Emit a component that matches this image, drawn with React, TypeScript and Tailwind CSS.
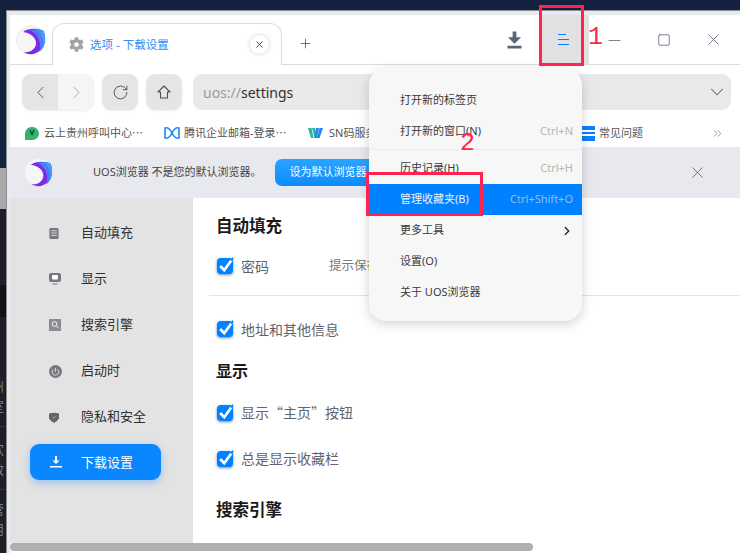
import { ChevronLeft, ChevronRight, ChevronDown, ChevronsRight, RotateCw, Plus, X, Minus, Square } from "lucide-react";
import { FaCog } from "react-icons/fa";

const font = "font-['Noto_Sans','Noto_Sans_CJK_SC',sans-serif]";

function Logo({ size }: { size: number }) {
    return (
        <svg width={size} height={size} viewBox="0 0 30 30" className="shrink-0">
            <circle cx="15" cy="15" r="14.5" fill="#f6f6f6" stroke="#e2e2e2" strokeWidth="0.6" />
            <path d="M7 7 C12 3 22 3 27.5 6 C30.5 14 29 24 20 28 C16 30 11 29.5 8 27 C14 28 20 24 20 18 C20 12 14 8 7 7 Z" fill="#7a2bea" />
            <path d="M14 5 C19 3.5 24 4 27.5 6 C30.5 14 29 23 23 27 C26 19 23 10 14 5 Z" fill="#4f7bf5" />
            <path d="M21 4.5 C24 4.5 26 5 27.5 6 C30 11 29.5 17 27 22 C28 15 26 9 21 4.5 Z" fill="#3f9ffb" />
        </svg>
    );
}

function Check() {
    return (
        <div className="relative w-4 h-4 rounded-[4px] bg-[#0081ff] shadow-[0_1px_3px_rgba(0,60,140,0.6)] shrink-0">
            <svg viewBox="0 0 16 16" className="absolute left-0 -top-[1px] w-[17px] h-[17px] overflow-visible">
                <path d="M3 8.5 L6.8 12.5 L13.4 3.2" fill="none" stroke="#fff" strokeWidth="2.5" />
                <path d="M13.4 3.2 L15.2 0.8" fill="none" stroke="#0081ff" strokeWidth="1.6" />
            </svg>
        </div>
    );
}

function NavItem({ label, icon }: { label: string; icon: React.ReactNode }) {
    return (
        <div className="h-[46px] flex items-center text-[13px] text-[#303030]">
            <div className="w-[52px] pl-[19px] flex justify-start">{icon}</div>
            <span className="-ml-px">{label}</span>
        </div>
    );
}

function MenuRow({ label, hint, active, arrow }: { label: string; hint?: string; active?: boolean; arrow?: boolean }) {
    return (
        <div className={`h-[31px] pl-[31px] pr-[9px] flex items-center justify-between text-[11px] ${active ? "bg-[#0081ff] text-[#e8f2ff]" : "text-[#3a3a3a]"}`}>
            <span>{label}</span>
            {hint && <span className={active ? "text-[#8fbfee]" : "text-[#b4b4b4]"}>{hint}</span>}
            {arrow && <ChevronRight className="w-[14px] h-[14px] text-[#222] -mr-[1px]" strokeWidth={2.2} />}
        </div>
    );
}

function Option({ label, h }: { label: string; h: string }) {
    return (
        <div className={`flex items-center gap-[8px] text-[14px] text-[#5f6470] pl-[8px] ${h}`}>
            <Check />
            <span className="font-['Noto_Sans_CJK_SC',sans-serif]">{label}</span>
        </div>
    );
}

export default function App() {
    return (
        <div className={`relative w-[740px] h-[553px] overflow-hidden bg-[#142040] ${font}`}>
            <div className="h-[10px] bg-[#14213f]" />
            <div className="flex h-[543px]">
                {/* desktop strip */}
                <div className="w-[6px] flex flex-col text-[13px] leading-[20px] text-[#7a7f88] overflow-hidden">
                    <div className="h-[158px] bg-[#14213f] shrink-0" />
                    <div className="h-[41px] bg-[#a9a9a9] shrink-0" />
                    <div className="h-[76px] bg-[#1d2026] shrink-0" />
                    <div className="h-[32px] bg-[#121317] shrink-0" />
                    <div className="h-[110px] bg-[#1d2026] pt-[59px] -indent-[9px] shrink-0 border-b border-[#33363c]">
                        <div>州</div>
                        <div>室</div>
                    </div>
                    <div className="h-[63px] bg-[#1d2026] pt-[12px] -indent-[9px] shrink-0 border-b border-[#33363c]">
                        <div>欢</div>
                        <div>效</div>
                    </div>
                    <div className="flex-1 bg-[#1d2026] pt-[9px] -indent-[9px]">
                        <div>管</div>
                        <div>用</div>
                    </div>
                </div>

                {/* browser window */}
                <div className="w-[734px] border-t border-l border-[#8a8c92] bg-[#e8eaf0] pt-[4px] pl-[3px] flex flex-col">
                    {/* tab bar */}
                    <div className="h-[50px] bg-white border-b border-[#dcdcdc] flex items-end shrink-0">
                        <div className="w-[42px] h-full pl-[6px] flex items-center"><Logo size={30} /></div>
                        <div className="w-[230px] h-[42px] -mb-px bg-white border border-b-0 border-[#dcdcdc] rounded-t-[12px] flex items-center pl-[16px] pr-[12px] text-[11.5px] text-[#2f8cf0]">
                            <FaCog className="w-[15px] h-[15px] text-[#a3a3a3] mr-[6px]" />
                            <span className="flex-1">选项 - 下载设置</span>
                            <div className="w-[19px] h-[19px] rounded-full bg-white shadow-[0_0_4px_rgba(0,0,0,0.2)] flex items-center justify-center">
                                <X className="w-[11px] h-[11px] text-[#444]" />
                            </div>
                        </div>
                        <div className="w-[46px] h-[42px] flex items-center justify-center">
                            <Plus className="w-[15px] h-[15px] text-[#555]" strokeWidth={1.3} />
                        </div>
                        <div className="flex-1" />
                        <div className="w-[50px] h-full flex items-center justify-center pt-[1px]">
                            <svg viewBox="0 0 16 18" className="w-[15px] h-[18px] text-[#5b6478]" fill="currentColor">
                                <path d="M6 0 H10 V6 H15 L8 13 L1 6 H6 Z M0.5 15 H15.5 V18 H0.5 Z" />
                            </svg>
                        </div>
                        <div className="w-[50px] h-full bg-[#e1e1e3] flex flex-col items-center justify-center gap-[4px] pr-[1px]">
                            <div className="w-[8px] h-px bg-[#0a80ff] mr-[3px]" />
                            <div className="w-[11px] h-px bg-[#0a80ff]" />
                            <div className="w-[11px] h-px bg-[#0a80ff]" />
                        </div>
                        <div className="w-[52px] h-full flex items-center justify-center pt-[2px] pr-[2px]">
                            <Minus className="w-[19px] h-[19px] text-[#5b6478]" strokeWidth={1} />
                        </div>
                        <div className="w-[45px] h-full flex items-center justify-center pt-[1px]">
                            <Square className="w-[14px] h-[14px] text-[#5b6478]" strokeWidth={1.4} />
                        </div>
                        <div className="w-[54px] h-full flex items-center justify-center">
                            <X className="w-[19px] h-[19px] text-[#5b6478]" strokeWidth={1.1} />
                        </div>
                    </div>

                    {/* toolbar */}
                    <div className="h-[53px] bg-white flex items-start pt-[9px] pl-[12px] pr-[9px] shrink-0">
                        <div className="w-[72px] h-[36px] rounded-[9px] flex overflow-hidden shadow-[0_1px_2px_rgba(0,0,0,0.08)]">
                            <div className="w-[36px] bg-[#e5e5e5] flex items-center justify-center">
                                <ChevronLeft className="w-[21px] h-[21px] text-[#555]" strokeWidth={1.1} />
                            </div>
                            <div className="w-[36px] bg-[#f5f5f5] flex items-center justify-center">
                                <ChevronRight className="w-[21px] h-[21px] text-[#aaa]" strokeWidth={1.1} />
                            </div>
                        </div>
                        <div className="w-[36px] h-[36px] ml-[8px] rounded-[9px] bg-[#e5e5e5] shadow-[0_1px_2px_rgba(0,0,0,0.08)] flex items-center justify-center">
                            <RotateCw className="w-[17px] h-[17px] text-[#4a4f5c]" strokeWidth={1.3} />
                        </div>
                        <div className="w-[36px] h-[36px] ml-[8px] rounded-[9px] bg-[#e5e5e5] shadow-[0_1px_2px_rgba(0,0,0,0.08)] flex items-center justify-center">
                            <svg viewBox="0 0 14 14" className="w-[14px] h-[14px]" fill="none" stroke="#4a4f5c" strokeWidth="1.1">
                                <path d="M7 1 L13 7 H10.5 V13 H3.5 V7 H1 Z" strokeLinejoin="round" />
                            </svg>
                        </div>
                        <div className="flex-1 h-[36px] ml-[11px] rounded-[9px] bg-[#e9e9e9] flex items-center justify-between pl-[10px] pr-[3px] text-[14px]">
                            <span><span className="text-[#9a9a9a]">uos://</span><span className="text-[#303030]">settings</span></span>
                            <ChevronDown className="w-[22px] h-[22px] text-[#5b6478]" strokeWidth={1.1} />
                        </div>
                    </div>

                    {/* bookmarks */}
                    <div className="h-[29px] bg-white flex items-center pl-[15px] pr-[16px] pt-[1px] text-[11px] text-[#555] shrink-0">
                        <div className="w-[14px] h-[13px] rounded-full rounded-bl-none bg-[#2fb36f] text-[7px] text-[#222] font-bold flex items-center justify-center mr-[5px]">V</div>
                        <span className="w-[120px]">云上贵州呼叫中心⋯</span>
                        <svg viewBox="0 0 16 14" className="w-[16px] h-[14px] mr-[4px]" fill="none" stroke="#1e88f5" strokeWidth="1.6">
                            <path d="M1 2 C4 1 6 3 8 7 C10 11 12 13 15 12 V2 C12 1 10 3 8 7 C6 11 4 13 1 12 Z" />
                        </svg>
                        <span className="w-[124px]">腾讯企业邮箱-登录⋯</span>
                        <svg viewBox="0 0 15 10" className="w-[15px] h-[10px] mr-[6px]">
                            <path d="M0 0 H3.5 L5.5 10 H3 Z M4 0 H7 L9 10 H6.5 Z" fill="#27b5a0" />
                            <path d="M8 0 H11 L9 10 H6.5 Z M11.5 0 H15 L11.5 10 H9 Z" fill="#1e88f5" />
                        </svg>
                        <span className="flex-1">SN码服务</span>
                        <div className="w-[13px] h-[15px] bg-[#0a80ff] flex flex-col justify-center gap-[2px] mr-[4px]">
                            <div className="h-[2px] bg-white" />
                            <div className="h-[2px] bg-white" />
                        </div>
                        <span className="w-[112px]">常见问题</span>
                        <ChevronsRight className="w-[13px] h-[13px] text-[#666]" strokeWidth={1.3} />
                    </div>

                    {/* default browser bar */}
                    <div className="h-[51px] bg-[#e8e9ee] flex items-center pl-[14px] pr-[33px] shrink-0">
                        <Logo size={29} />
                        <span className="ml-[40px] text-[11px] text-[#444]">UOS浏览器 不是您的默认浏览器。</span>
                        <div className="ml-[13px] w-[110px] h-[27px] rounded-[7px] bg-gradient-to-b from-[#28a4ff] to-[#0a8cff] text-[11px] text-white flex items-center pl-[15px]">设为默认浏览器</div>
                        <div className="flex-1" />
                        <X className="w-[19px] h-[19px] text-[#5b6478]" strokeWidth={1.1} />
                    </div>

                    {/* settings page */}
                    <div className="flex-1 flex bg-white min-h-0">
                        <div className="w-[183px] bg-[#e3e3e3] pt-[12px] pl-[20px] pr-[32px]">
                            <NavItem label="自动填充" icon={
                                <svg viewBox="0 0 10 12" className="w-[10px] h-[11px]"><rect width="10" height="12" rx="1.5" fill="#77777f" /><path d="M2 3H8M2 5.5H8M2 8H8" stroke="#fff" strokeWidth="0.8" /></svg>
                            } />
                            <NavItem label="显示" icon={
                                <svg viewBox="0 0 12 12" className="w-[12px] h-[12px]"><rect width="12" height="9" rx="2" fill="#77777f" /><rect x="3" y="2" width="6" height="4.5" rx="1" fill="#fff" /><rect x="3.5" y="10.5" width="5" height="1" fill="#77777f" /></svg>
                            } />
                            <NavItem label="搜索引擎" icon={
                                <svg viewBox="0 0 12 12" className="w-[12px] h-[12px]"><rect width="12" height="12" fill="#8a8a90" /><circle cx="5.5" cy="5" r="2.4" fill="none" stroke="#fff" strokeWidth="0.9" /><path d="M7.3 6.8L10 9.5" stroke="#fff" strokeWidth="0.9" /></svg>
                            } />
                            <NavItem label="启动时" icon={
                                <svg viewBox="0 0 13 13" className="w-[13px] h-[13px]"><circle cx="6.5" cy="6.5" r="6.5" fill="#77777f" /><path d="M4.2 4.5A3.3 3.3 0 1 0 8.8 4.5M6.5 3V6.8" fill="none" stroke="#e3e3e3" strokeWidth="0.9" /></svg>
                            } />
                            <NavItem label="隐私和安全" icon={
                                <svg viewBox="0 0 10 11" className="w-[10px] h-[11px]"><path d="M0 1.5 Q5 0 10 1.5 V6.5 Q8 9.5 5 11 Q2 9.5 0 6.5 Z" fill="#66666e" /><path d="M3.5 5L5 6.2L6.8 4.2" fill="none" stroke="#ccc" strokeWidth="0.6" /></svg>
                            } />
                            <div className="h-[36px] mt-[4px] rounded-[9px] bg-[#0a87ff] shadow-[0_3px_8px_rgba(10,135,255,0.35)] flex items-center text-[13px] text-white">
                                <div className="w-[52px] pl-[20px]">
                                    <svg viewBox="0 0 12 12" className="w-[12px] h-[12px]" fill="#fff"><path d="M5 0H7V4.5H9.5L6 8L2.5 4.5H5Z M0 10H12V11.5H0Z" /></svg>
                                </div>
                                <span className="-ml-px pt-[1px]">下载设置</span>
                            </div>
                        </div>

                        <div className="flex-1 overflow-hidden">
                            <div className="ml-[16px] h-[57px] flex items-center pl-[7px] pb-[1px] text-[16.5px] font-bold text-[#1a1a1a]">自动填充</div>
                            <div className="ml-[16px] h-[40px] flex items-center gap-[8px] pl-[8px] pb-[18px] text-[14px] text-[#5f6470]">
                                <Check />
                                <span className="w-[80px]">密码</span>
                                <span className="text-[12.5px] text-[#777]">提示保存</span>
                            </div>
                            <div className="ml-[16px] h-px bg-[#e3e3e3]" />
                            <Option label="地址和其他信息" h="ml-[16px] h-[67px] pb-[1px]" />
                            <div className="ml-[16px] -mt-[1px] h-[17px] flex items-center pl-[7px] text-[16px] font-bold text-[#1a1a1a]">显示</div>
                            <Option label="显示“主页”按钮" h="ml-[16px] h-[67px]" />
                            <Option label="总是显示收藏栏" h="ml-[16px] h-[25px]" />
                            <div className="ml-[16px] h-[79px] flex items-center pl-[7px] text-[16.5px] font-bold text-[#1a1a1a]">搜索引擎</div>
                        </div>
                    </div>
                </div>
            </div>

            {/* page scrollbar */}
            <div className="absolute left-[10px] right-0 top-[543px] h-[10px] bg-white">
                <div className="w-[523px] h-[8px] rounded-full bg-[#b0b0b0]" />
            </div>

            {/* popup menu */}
            <div className="absolute left-[369px] top-[68px] w-[213px] h-[253px] pt-[17px] rounded-[17px] bg-[#f7f7f7] shadow-[0_3px_12px_rgba(0,0,0,0.18)]">
                <MenuRow label="打开新的标签页" />
                <MenuRow label="打开新的窗口(N)" hint="Ctrl+N" />
                <div className="h-px bg-[#ececec] mt-[2px] mb-[3px]" />
                <MenuRow label="历史记录(H)" hint="Ctrl+H" />
                <MenuRow label="管理收藏夹(B)" hint="Ctrl+Shift+O" active />
                <MenuRow label="更多工具" arrow />
                <MenuRow label="设置(O)" />
                <MenuRow label="关于 UOS浏览器" />
            </div>

            {/* red annotations */}
            <div className="absolute left-[539px] top-[5px] w-[45px] h-[61px] border-[3px] border-[#ff2450]" />
            <div className="absolute left-[366px] top-[172px] w-[117px] h-[44px] border-[3px] border-[#ff2450]" />
            <span className="absolute left-[588px] top-[20px] text-[25px] leading-[36px] text-[#ff2450] font-['Liberation_Mono',monospace]">1</span>
            <span className="absolute left-[460px] top-[126px] text-[25px] leading-[36px] text-[#ff2450] font-['Liberation_Mono',monospace]">2</span>
        </div>
    );
}
